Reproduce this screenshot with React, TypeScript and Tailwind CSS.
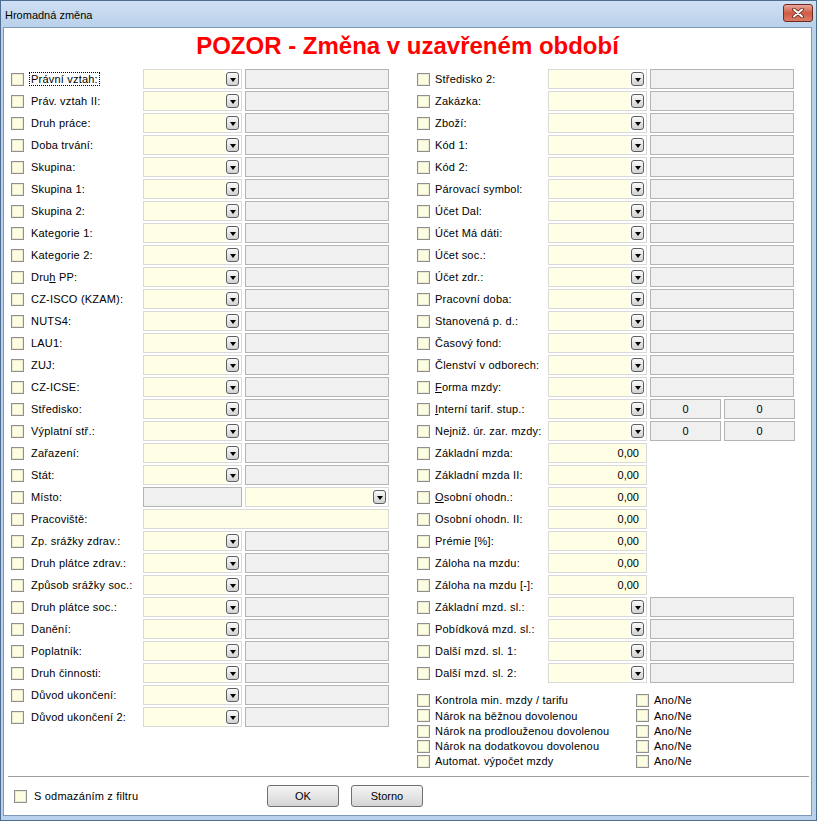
import React from "react";

type Kind = "combo" | "misto" | "wide" | "num" | "tarif";

type RowDef = {
  label: React.ReactNode;
  kind: Kind;
};

const font = { fontFamily: '"Liberation Sans", Arial, sans-serif' };

function CheckBox() {
  return (
    <div className="w-[13px] h-[13px] shrink-0 border border-[#8f8f8f] bg-[#fdfde2] shadow-[inset_0_0_0_1px_#ecebd0]" />
  );
}

function DropButton() {
  return (
    <div className="w-[16px] h-full bg-white flex items-center pl-[1px]">
      <div className="w-[13px] h-[14px] rounded-[3px] border border-[#5e5e5e] bg-gradient-to-b from-[#fafafa] to-[#d2d2d2] flex items-center justify-center">
        <div className="w-0 h-0 mt-[1px] border-l-[3.5px] border-r-[3.5px] border-t-[4px] border-l-transparent border-r-transparent border-t-black" />
      </div>
    </div>
  );
}

function Combo({ width }: { width: string }) {
  return (
    <div className={`${width} h-[20px] shrink-0 border border-[#d9d9d9] bg-[#ffffe6] flex justify-end`}>
      <DropButton />
    </div>
  );
}

function GreyBox({ width, text }: { width: string; text?: string }) {
  return (
    <div
      className={`${width} h-[20px] shrink-0 border border-[#b4b4b4] bg-[#f0f0f0] flex items-center justify-center text-[11px] text-black`}
    >
      {text}
    </div>
  );
}

function Fields({ kind }: { kind: Kind }) {
  if (kind === "misto") {
    return (
      <div className="flex gap-[3px]">
        <GreyBox width="w-[99px]" />
        <Combo width="w-[144px]" />
      </div>
    );
  }
  if (kind === "wide") {
    return <div className="w-[246px] h-[20px] border border-[#d9d9d9] bg-[#ffffe6]" />;
  }
  if (kind === "num") {
    return (
      <div className="w-[99px] h-[20px] border border-[#d9d9d9] bg-[#ffffe6] flex items-center justify-end pr-[7px] text-[11px]">
        0,00
      </div>
    );
  }
  if (kind === "tarif") {
    return (
      <div className="flex gap-[3px]">
        <Combo width="w-[99px]" />
        <GreyBox width="w-[71px]" text="0" />
        <GreyBox width="w-[71px]" text="0" />
      </div>
    );
  }
  return (
    <div className="flex gap-[3px]">
      <Combo width="w-[99px]" />
      <GreyBox width="w-[144px]" />
    </div>
  );
}

function FieldRow({ row, labelWidth }: { row: RowDef; labelWidth: string }) {
  return (
    <div className="flex items-center h-[20px] mb-[2px]">
      <CheckBox />
      <div className={`${labelWidth} shrink-0 text-[11px] tracking-[0.2px] text-black whitespace-nowrap`}>
        {row.label}
      </div>
      <Fields kind={row.kind} />
    </div>
  );
}

const c = (label: React.ReactNode): RowDef => ({ label, kind: "combo" });

const leftRows: RowDef[] = [
  c(
    <span className="outline outline-1 outline-dotted outline-black px-[1px] -ml-[1px]">
      Právní vztah:
    </span>,
  ),
  c("Práv. vztah II:"),
  c("Druh práce:"),
  c("Doba trvání:"),
  c("Skupina:"),
  c("Skupina 1:"),
  c("Skupina 2:"),
  c("Kategorie 1:"),
  c("Kategorie 2:"),
  c(
    <>
      Dru<u>h</u> PP:
    </>,
  ),
  c("CZ-ISCO (KZAM):"),
  c("NUTS4:"),
  c("LAU1:"),
  c("ZUJ:"),
  c("CZ-ICSE:"),
  c("Středisko:"),
  c("Výplatní stř.:"),
  c("Zařazení:"),
  c("Stát:"),
  { label: "Místo:", kind: "misto" },
  { label: "Pracoviště:", kind: "wide" },
  c("Zp. srážky zdrav.:"),
  c("Druh plátce zdrav.:"),
  c("Způsob srážky soc.:"),
  c("Druh plátce soc.:"),
  c("Danění:"),
  c("Poplatník:"),
  c("Druh činnosti:"),
  c("Důvod ukončení:"),
  c("Důvod ukončení 2:"),
];

const rightRows: RowDef[] = [
  c("Středisko 2:"),
  c("Zakázka:"),
  c("Zboží:"),
  c("Kód 1:"),
  c("Kód 2:"),
  c("Párovací symbol:"),
  c("Účet Dal:"),
  c("Účet Má dáti:"),
  c("Účet soc.:"),
  c("Účet zdr.:"),
  c("Pracovní doba:"),
  c("Stanovená p. d.:"),
  c("Časový fond:"),
  c("Členství v odborech:"),
  c(
    <>
      <u>F</u>orma mzdy:
    </>,
  ),
  {
    label: (
      <>
        <u>I</u>nterní tarif. stup.:
      </>
    ),
    kind: "tarif",
  },
  { label: "Nejniž. úr. zar. mzdy:", kind: "tarif" },
  { label: "Základní mzda:", kind: "num" },
  { label: "Základní mzda II:", kind: "num" },
  {
    label: (
      <>
        <u>O</u>sobní ohodn.:
      </>
    ),
    kind: "num",
  },
  { label: "Osobní ohodn. II:", kind: "num" },
  { label: "Prémie [%]:", kind: "num" },
  { label: "Záloha na mzdu:", kind: "num" },
  { label: "Záloha na mzdu [-]:", kind: "num" },
  c("Základní mzd. sl.:"),
  c("Pobídková mzd. sl.:"),
  c("Další mzd. sl. 1:"),
  c("Další mzd. sl. 2:"),
];

const flags = [
  "Kontrola min. mzdy / tarifu",
  "Nárok na běžnou dovolenou",
  "Nárok na prodlouženou dovolenou",
  "Nárok na dodatkovou dovolenou",
  "Automat. výpočet mzdy",
];

function CloseButton() {
  return (
    <div className="w-[30px] h-[18px] rounded-[3px] border border-[#6f2a22] bg-gradient-to-b from-[#e9a89b] via-[#cf5a45] to-[#d97d68] flex items-center justify-center">
      <svg width="12" height="10" viewBox="0 0 12 10">
        <path d="M2 1.5 L10 8.5 M10 1.5 L2 8.5" stroke="#5a1f18" strokeWidth="3.6" strokeLinecap="round" />
        <path d="M2 1.5 L10 8.5 M10 1.5 L2 8.5" stroke="#ffffff" strokeWidth="2" strokeLinecap="round" />
      </svg>
    </div>
  );
}

function PushButton({ text }: { text: string }) {
  return (
    <div className="w-[72px] h-[22px] rounded-[3px] border border-[#707070] bg-gradient-to-b from-[#f4f4f4] via-[#e6e6e6] to-[#d4d4d4] flex items-center justify-center text-[11px] text-black">
      {text}
    </div>
  );
}

export default function App() {
  return (
    <div className="w-[817px] h-[821px] border border-[#4f6d92] bg-[#b9d1ea]" style={font}>
      {/* Title bar */}
      <div className="h-[26px] flex items-start justify-between bg-gradient-to-b from-[#cfe0f3] to-[#b9d1ea]">
        <div className="pl-[4px] pt-[6px] text-[11px] text-black">Hromadná změna</div>
        <div className="pt-[3px] pr-[3px]">
          <CloseButton />
        </div>
      </div>

      {/* Content */}
      <div className="ml-[2px] w-[809px] h-[789px] border border-[#7f98b7] bg-white flex flex-col">
        <div className="h-[748px]">
          <div className="h-[41px] pt-[4px] text-center text-[24px] leading-[28px] font-bold text-[#ff0000]">
            POZOR - Změna v uzavřeném období
          </div>
          <div className="flex pl-[7px]">
            <div className="w-[406px]">
              {leftRows.map((row, i) => (
                <FieldRow key={i} row={row} labelWidth="w-[119px] pl-[7px]" />
              ))}
            </div>
            <div className="w-[390px]">
              {rightRows.map((row, i) => (
                <FieldRow key={i} row={row} labelWidth="w-[118px] pl-[5px]" />
              ))}
              <div className="mt-[10px]">
                {flags.map((f) => (
                  <div key={f} className="flex items-center h-[15.25px] text-[11px] tracking-[0.2px]">
                    <CheckBox />
                    <div className="w-[206px] pl-[5px] whitespace-nowrap">{f}</div>
                    <CheckBox />
                    <div className="pl-[5px]">Ano/Ne</div>
                  </div>
                ))}
              </div>
            </div>
          </div>
        </div>

        <div className="ml-[4px] mr-[2px] h-px bg-[#a0a0a0]" />

        <div className="flex items-start pt-[8px]">
          <div className="w-[263px] pl-[10px] h-[22px] flex items-center text-[11px] tracking-[0.2px]">
            <CheckBox />
            <span className="pl-[7px]">S odmazáním z filtru</span>
          </div>
          <div className="flex gap-[12px]">
            <PushButton text="OK" />
            <PushButton text="Storno" />
          </div>
        </div>
      </div>
    </div>
  );
}
